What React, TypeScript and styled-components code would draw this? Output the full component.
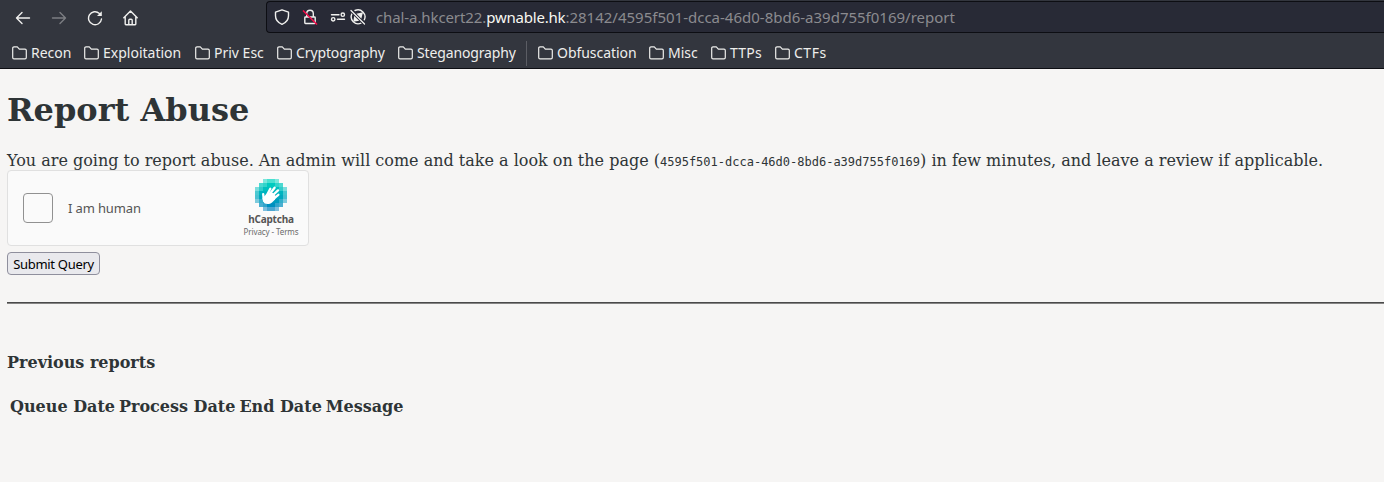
import React from "react";
import styled, { createGlobalStyle } from "styled-components";

const Global = createGlobalStyle`
  html, body { margin: 0; padding: 0; }
  body { background: #f6f5f4; color: #2e3436; overflow: hidden; }
  *, *::before, *::after { box-sizing: border-box; }
`;

const Window = styled.div`
  width: 100%;
  height: 482px;
  overflow: hidden;
  font-family: "DejaVu Serif", serif;
`;

const Chrome = styled.header`
  height: 69px;
  background: #33363e;
  border-bottom: 1px solid #0d0e13;
  font-family: "Noto Sans", sans-serif;
  color: #eeeeec;
`;

const NavBar = styled.div`
  display: flex;
  height: 34px;
  padding-top: 1px;
`;

const NavButtons = styled.div`
  display: flex;
  align-items: center;
  width: 266px;
  padding-left: 15px;
  gap: 20px;
`;

const NavIcon = styled.svg<{ $dim?: boolean }>`
  flex: none;
  width: 16px;
  height: 16px;
  fill: none;
  stroke: ${(p) => (p.$dim ? "#7c7e82" : "#f0f0ee")};
  stroke-width: 1.4;
  stroke-linecap: round;
  stroke-linejoin: round;
`;

const UrlBar = styled.div`
  display: flex;
  align-items: center;
  flex: 1;
  height: 32px;
  padding-left: 7px;
  background: #282a36;
  border: 1px solid #0d0e13;
  border-right: 0;
  border-radius: 4px 0 0 4px;
`;

const UrlIcons = styled.div`
  display: flex;
  align-items: center;
  width: 102px;
`;

const UrlIcon = styled(NavIcon)<{ $after: number }>`
  margin-right: ${(p) => p.$after}px;
`;

const Url = styled.div`
  font-size: 15px;
  line-height: 20px;
  letter-spacing: -0.1px;
  white-space: nowrap;
  color: #8b8b8f;
`;

const Host = styled.span`
  letter-spacing: -0.2px;
  color: #f8f8f2;
`;

const Path = styled.span`
  letter-spacing: 0;
`;

const Bookmarks = styled.nav`
  display: flex;
  align-items: center;
  height: 36px;
  padding: 2px 0 0 12px;
`;

const Bookmark = styled.div<{ $width: number; $tracking: number }>`
  display: flex;
  align-items: center;
  gap: 4px;
  width: ${(p) => p.$width}px;
  font-size: 14px;
  line-height: 20px;
  letter-spacing: ${(p) => p.$tracking}px;
  white-space: nowrap;
  svg { flex: none; }
`;

const Divider = styled.div`
  width: 1px;
  height: 25px;
  margin-right: 11px;
  background: #5b5d64;
`;

const Page = styled.main`
  padding: 22px 0 0 7px;
`;

const Title = styled.h1`
  margin: 0;
  font-size: 32px;
  line-height: 38px;
`;

const Intro = styled.p`
  height: 19px;
  margin: 22px 0 0;
  font-size: 16px;
  line-height: 20px;
  white-space: nowrap;
  code {
    font-family: "DejaVu Sans Mono", monospace;
    font-size: 12px;
  }
`;

const Captcha = styled.div`
  display: flex;
  align-items: center;
  width: 302px;
  height: 76px;
  padding-left: 15px;
  background: #fafafa;
  border: 1px solid #e0e0e0;
  border-radius: 4px;
  font-family: "Noto Sans", sans-serif;
`;

const Checkbox = styled.div`
  flex: none;
  width: 30px;
  height: 30px;
  background: #fafafa;
  border: 1px solid #919191;
  border-radius: 4px;
`;

const Human = styled.div`
  flex: 1;
  margin-left: 15px;
  font-size: 13px;
  line-height: 18px;
  letter-spacing: -0.13px;
  color: #555;
`;

const Brand = styled.div`
  display: flex;
  flex-direction: column;
  align-items: center;
  align-self: flex-start;
  flex: none;
  width: 74px;
  padding-top: 8px;
`;

const BrandName = styled.div`
  margin-top: 1px;
  font-size: 10px;
  font-weight: 700;
  line-height: 14px;
  letter-spacing: -0.2px;
  color: #555;
`;

const Legal = styled.div`
  font-size: 8px;
  line-height: 12px;
  letter-spacing: -0.1px;
  white-space: nowrap;
  color: #6a6a6a;
`;

const Submit = styled.button`
  display: block;
  width: 93px;
  height: 23px;
  margin: 6px 0 0;
  padding: 0;
  background: #e9e9ed;
  border: 1px solid #8f8f9d;
  border-radius: 4px;
  font-family: "Noto Sans", sans-serif;
  font-size: 13px;
  line-height: 22px;
  letter-spacing: -0.3px;
  white-space: nowrap;
  color: #000;
`;

const Rule = styled.hr`
  height: 2px;
  margin: 27px 0 0;
  border: 0;
  border-top: 1px solid #4a4a4a;
  background: #858483;
`;

const Subtitle = styled.h4`
  margin: 49px 0 0;
  font-size: 16px;
  line-height: 20px;
`;

const Reports = styled.table`
  margin-top: 21px;
  border-spacing: 2px;
  font-size: 16px;
  line-height: 20px;
  th { padding: 1px; white-space: nowrap; }
`;

const Folder = () => (
  <svg width="15" height="14" viewBox="0 0 15 14" fill="none" stroke="#eeeeec" strokeWidth="1.2" strokeLinejoin="round">
    <path d="M.7 11.5v-9.300a1.300 1.300 0 0 1 1.300-1.300h3.300l2 2.200h5.700a1.300 1.300 0 0 1 1.300 1.300v7.100a1.300 1.300 0 0 1-1.300 1.300h-11a1.300 1.300 0 0 1-1.300-1.300z" />
  </svg>
);

const logoRows = [
  [2, 5], [1, 6], [0, 7], [0, 7], [0, 7], [0, 7], [1, 6], [2, 5],
];
const rowColors = ["#00d4bf", "#00cabf", "#00c0bf", "#00b4bf", "#00a8bf", "#009cbf", "#008fbf", "#0082bf"];

const cellOpacity = (x: number, y: number) => {
  const near = Math.min(x, 7 - x);
  const vert = Math.min(y, 7 - y);
  if (near === 0) return vert === 2 ? 0.5 : 0.7;
  if (vert === 0) return near === 2 ? 0.5 : 0.7;
  if (near === 1 && vert === 1) return 0.7;
  if (near === 1 || vert === 1) return near + vert === 3 ? 0.8 : 1;
  return 1;
};

const CaptchaLogo = () => (
  <svg width="32" height="32" viewBox="0 0 32 32">
    <g shapeRendering="crispEdges">
      {logoRows.flatMap(([from, to], y) =>
        Array.from({ length: to - from + 1 }, (_, i) => from + i).map((x) => (
          <rect key={`${x}-${y}`} x={x * 4} y={y * 4} width="4" height="4" fill={rowColors[y]} opacity={cellOpacity(x, y)} />
        )),
      )}
    </g>
    <path
      d="M7.500 19 11 15.500 14 13.500 18 14 21 17.500 20 20.500 17 23.500C14 25.800 9.500 25.500 8 22.500z"
      fill="#fff"
    />
    <g stroke="#fff" strokeWidth="2.300" strokeLinecap="round" fill="none">
      <path d="M12 16 15.300 9.700" />
      <path d="M14 16 19.600 8.700" />
      <path d="M16 18 23 11.400" />
      <path d="M17.500 20.500 23.400 15.800" />
      <path d="M8.200 15.200 8.700 20" />
    </g>
  </svg>
);

type Entry = [name: string, width: number, tracking: number];

const group1: Entry[] = [
  ["Recon", 72, 0], ["Exploitation", 111, 0], ["Priv Esc", 82, 0], ["Cryptography", 121, -0.12], ["Steganography", 128, -0.14],
];
const group2: Entry[] = [["Obfuscation", 111, -0.05], ["Misc", 62, 0], ["TTPs", 64, 0.2], ["CTFs", 60, 0.5]];

const BookmarkList = ({ items }: { items: Entry[] }) => (
  <>
    {items.map(([name, width, tracking]) => (
      <Bookmark key={name} $width={width} $tracking={tracking}>
        <Folder />
        <span>{name}</span>
      </Bookmark>
    ))}
  </>
);

export default function App() {
  return (
    <Window>
      <Global />
      <Chrome>
        <NavBar>
          <NavButtons>
            <NavIcon viewBox="0 0 16 16"><path d="M14.500 8H1.500M7 2.500 1.500 8 7 13.500" /></NavIcon>
            <NavIcon $dim viewBox="0 0 16 16"><path d="M1.500 8h13M9 2.500 14.500 8 9 13.500" /></NavIcon>
            <NavIcon viewBox="0 0 16 16">
              <path d="M14.500 9A6.500 6.500 0 1 1 12.400 3.400" />
              <path d="M14.800 1.300v4.800H10z" fill="#f0f0ee" stroke="none" />
            </NavIcon>
            <NavIcon viewBox="0 0 16 16">
              <path d="M.8 7.800 7.500 1l6.700 6.800M2.200 6.800v7.200a.7.7 0 0 0 .7.700h9.200a.7.7 0 0 0 .7-.700V6.800M5.800 14.500v-4.300a1 1 0 0 1 1-1h1.400a1 1 0 0 1 1 1v4.300" />
            </NavIcon>
          </NavButtons>
          <UrlBar>
            <UrlIcons>
              <UrlIcon $after={12} viewBox="0 0 16 16">
                <path d="M8 .8 14.500 3.200v3.500c0 4-2.600 7-6.500 8.600C4.100 13.700 1.500 10.700 1.500 6.700V3.200z" />
              </UrlIcon>
              <UrlIcon $after={12} viewBox="0 0 16 16">
                <path d="M4.700 8V4.500a3.300 3.300 0 0 1 6.600 0V8M3.500 8h9a.7.700 0 0 1 .7.700v5.100a.7.700 0 0 1-.7.700h-9a.7.700 0 0 1-.7-.700V8.700a.7.700 0 0 1 .7-.700z" />
                <path d="M1.500 2 14.500 15" stroke="#ef0f4b" strokeWidth="1.700" />
              </UrlIcon>
              <UrlIcon $after={4} viewBox="0 0 16 16">
                <path d="M1.500 5.700h7.500M7.500 10.300h7" />
                <circle cx="12.800" cy="5.700" r="1.700" />
                <circle cx="3.200" cy="10.300" r="1.700" />
              </UrlIcon>
              <UrlIcon $after={0} viewBox="0 0 16 16">
                <path d="M5 1.500A7 7 0 0 1 14.300 10.800M11 14.200A7 7 0 0 1 1.800 5" />
                <path d="M6.300 4.800 13 3.200 11.300 9.800z" fill="#f0f0ee" stroke="none" />
                <path d="M4.200 6.700 9.300 11.800 3.400 12.700z" fill="#f0f0ee" stroke="none" />
                <path d="M1 1.500 14.500 15" stroke="#282a36" strokeWidth="2.800" />
                <path d="M1 1.500 14.500 15" strokeWidth="1.300" />
              </UrlIcon>
            </UrlIcons>
            <Url>
              chal-a.hkcert22.<Host>pwnable.hk</Host>
              <Path>:28142/4595f501-dcca-46d0-8bd6-a39d755f0169/report</Path>
            </Url>
          </UrlBar>
        </NavBar>
        <Bookmarks>
          <BookmarkList items={group1} />
          <Divider />
          <BookmarkList items={group2} />
        </Bookmarks>
      </Chrome>
      <Page>
        <Title>Report Abuse</Title>
        <Intro>
          You are going to report abuse. An admin will come and take a look on the page (
          <code>4595f501-dcca-46d0-8bd6-a39d755f0169</code>) in few minutes, and leave a review if applicable.
        </Intro>
        <Captcha>
          <Checkbox />
          <Human>I am human</Human>
          <Brand>
            <CaptchaLogo />
            <BrandName>hCaptcha</BrandName>
            <Legal>Privacy - Terms</Legal>
          </Brand>
        </Captcha>
        <Submit>Submit Query</Submit>
        <Rule />
        <Subtitle>Previous reports</Subtitle>
        <Reports>
          <thead>
            <tr>
              <th>Queue Date</th>
              <th>Process Date</th>
              <th>End Date</th>
              <th>Message</th>
            </tr>
          </thead>
        </Reports>
      </Page>
    </Window>
  );
}
